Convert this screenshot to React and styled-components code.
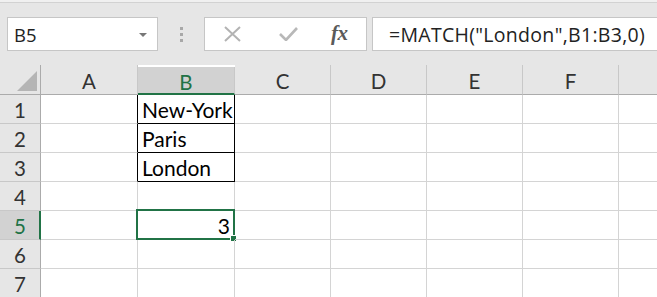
import React from "react";
import styled, { createGlobalStyle, css } from "styled-components";

const GREEN = "#217346";
const GRID = "#d4d4d4";

const GlobalStyle = createGlobalStyle`
  html, body { margin: 0; padding: 0; background: #fff; overflow: hidden; }
  body { font-family: "Open Sans", "Noto Sans", sans-serif; }
`;

const Page = styled.div`
  width: 657px;
  height: 297px;
  overflow: hidden;
  display: flex;
  flex-direction: column;
`;

const Toolbar = styled.div`
  background: #e6e6e6;
  height: 65px;
  display: flex;
  flex-direction: column;
  flex-shrink: 0;
`;

const TopStrip = styled.div`
  height: 2px;
  background: #f0f0f0;
  border-bottom: 1px solid #d2d2d2;
`;

const FormulaRow = styled.div`
  margin-top: 14px;
  height: 34px;
  display: flex;
  align-items: stretch;
  padding-left: 7px;
`;

const NameBox = styled.div`
  box-sizing: border-box;
  width: 151px;
  background: #fff;
  border: 1px solid #c6c6c6;
  display: flex;
  align-items: center;
  justify-content: space-between;
  padding: 0 10px 0 6px;
  font-family: "Open Sans", sans-serif;
  font-size: 18.5px;
  color: #222;
`;

const Caret = styled.span`
  width: 0;
  height: 0;
  border-left: 4px solid transparent;
  border-right: 4px solid transparent;
  border-top: 4px solid #777;
  margin-top: 1px;
`;

const Grip = styled.div`
  width: 46px;
  display: flex;
  flex-direction: column;
  align-items: center;
  justify-content: center;
  gap: 3px;
`;

const GripDot = styled.span`
  width: 3px;
  height: 3px;
  background: #a8a8a8;
`;

const ButtonBox = styled.div`
  box-sizing: border-box;
  width: 163px;
  background: #fff;
  border: 1px solid #c6c6c6;
  display: flex;
  align-items: center;
  padding-left: 19px;
`;

const IconSlot = styled.span`
  display: flex;
  align-items: center;
  justify-content: center;
  width: ${(p) => p.$w}px;
  margin-right: ${(p) => p.$mr || 0}px;
`;

const Fx = styled.span`
  font-family: "Liberation Serif", "DejaVu Serif", serif;
  font-style: italic;
  font-weight: bold;
  font-size: 21px;
  color: #5a5a5a;
  letter-spacing: -0.5px;
  line-height: 1;
  margin-top: -2px;
`;

const FormulaInput = styled.div`
  box-sizing: border-box;
  flex: 1;
  margin-left: 5px;
  background: #fff;
  border: 1px solid #c6c6c6;
  border-right: none;
  display: flex;
  align-items: center;
  padding-left: 16px;
  font-family: "Open Sans", sans-serif;
  font-size: 19.5px;
  letter-spacing: 0.3px;
  color: #222;
  white-space: nowrap;
`;

const Sheet = styled.div`
  display: grid;
  grid-template-columns: 41px 97px 97px 96px 96px 96px 96px 96px;
  grid-template-rows: 30px repeat(7, 29px);
  font-family: "Lato", "Open Sans", sans-serif;
`;

const Corner = styled.div`
  box-sizing: border-box;
  background: #e6e6e6;
  border-right: 1px solid #ababab;
  border-bottom: 1px solid #ababab;
  display: flex;
  align-items: flex-end;
  justify-content: flex-end;
  padding: 0 3px 3px 0;
`;

const CornerTri = styled.span`
  width: 0;
  height: 0;
  border-left: 20px solid transparent;
  border-bottom: 20px solid #b5b5b5;
`;

const ColHead = styled.div`
  box-sizing: border-box;
  background: ${(p) => (p.$active ? "#d2d2d2" : "#e6e6e6")};
  border-right: 1px solid #c8c8c8;
  border-bottom: ${(p) => (p.$active ? `2px solid ${GREEN}` : "1px solid #ababab")};
  color: ${(p) => (p.$active ? GREEN : "#333")};
  display: flex;
  align-items: center;
  justify-content: center;
  font-size: 20.5px;
  padding-top: ${(p) => (p.$active ? 3 : 2)}px;
  ${(p) => p.$active && css`margin-top: 2px;`}
`;

const RowHead = styled.div`
  box-sizing: border-box;
  background: ${(p) => (p.$active ? "#d2d2d2" : "#e6e6e6")};
  border-bottom: 1px solid #c8c8c8;
  border-right: ${(p) => (p.$active ? `2px solid ${GREEN}` : "1px solid #ababab")};
  color: ${(p) => (p.$active ? GREEN : "#333")};
  display: flex;
  align-items: center;
  justify-content: center;
  font-size: 20.5px;
  padding-top: 1px;
  padding-left: ${(p) => (p.$active ? 1 : 0)}px;
`;

const Cell = styled.div`
  box-sizing: border-box;
  position: relative;
  border-right: 1px solid ${(p) => (p.$boxRight ? "#000" : GRID)};
  border-bottom: 1px solid ${(p) => (p.$boxBottom ? "#000" : GRID)};
  display: flex;
  align-items: flex-end;
  justify-content: ${(p) => (p.$num ? "flex-end" : "flex-start")};
  padding: 0 4px 1px 4px;
  font-size: 21px;
  color: #000;
  line-height: 24px;
  white-space: nowrap;
`;

const Selection = styled.div`
  position: absolute;
  left: -2px;
  top: -2px;
  right: -1px;
  bottom: -1px;
  border: 2px solid ${GREEN};
  pointer-events: none;
`;

const FillHandle = styled.span`
  position: absolute;
  right: -4px;
  bottom: -4px;
  width: 5px;
  height: 5px;
  background: ${GREEN};
  border: 1px solid #fff;
`;

const cols = ["A", "B", "C", "D", "E", "F", ""];
const data = { "1": "New-York", "2": "Paris", "3": "London" };

export default function App() {
  return (
    <Page>
      <GlobalStyle />
      <Toolbar>
        <TopStrip />
        <FormulaRow>
          <NameBox>
            <span>B5</span>
            <Caret />
          </NameBox>
          <Grip>
            <GripDot />
            <GripDot />
            <GripDot />
          </Grip>
          <ButtonBox>
            <IconSlot $w={17} $mr={38}>
              <svg width="17" height="16" viewBox="0 0 17 16">
                <path d="M1 1 L16 15 M16 1 L1 15" stroke="#b3b3b3" strokeWidth="2" fill="none" />
              </svg>
            </IconSlot>
            <IconSlot $w={19} $mr={33}>
              <svg width="19" height="14" viewBox="0 0 19 14">
                <path d="M1 7 L7 13 L18 1" stroke="#b8b8b8" strokeWidth="2.6" fill="none" />
              </svg>
            </IconSlot>
            <Fx>fx</Fx>
          </ButtonBox>
          <FormulaInput>=MATCH("London",B1:B3,0)</FormulaInput>
        </FormulaRow>
      </Toolbar>
      <Sheet>
        <Corner>
          <CornerTri />
        </Corner>
        {cols.map((c, i) => (
          <ColHead key={"h" + i} $active={c === "B"}>
            {c}
          </ColHead>
        ))}
        {[1, 2, 3, 4, 5, 6, 7].map((r) => (
          <React.Fragment key={r}>
            <RowHead $active={r === 5}>{r}</RowHead>
            {cols.map((c, i) => {
              const boxed = c === "B" && r <= 3;
              const leftOfBox = c === "A" && r <= 3;
              return (
                <Cell
                  key={c + i + r}
                  $boxRight={boxed || leftOfBox}
                  $boxBottom={boxed}
                  $num={c === "B" && r === 5}
                >
                  {c === "B" && data[r]}
                  {c === "B" && r === 5 && (
                    <>
                      3
                      <Selection>
                        <FillHandle />
                      </Selection>
                    </>
                  )}
                </Cell>
              );
            })}
          </React.Fragment>
        ))}
      </Sheet>
    </Page>
  );
}
